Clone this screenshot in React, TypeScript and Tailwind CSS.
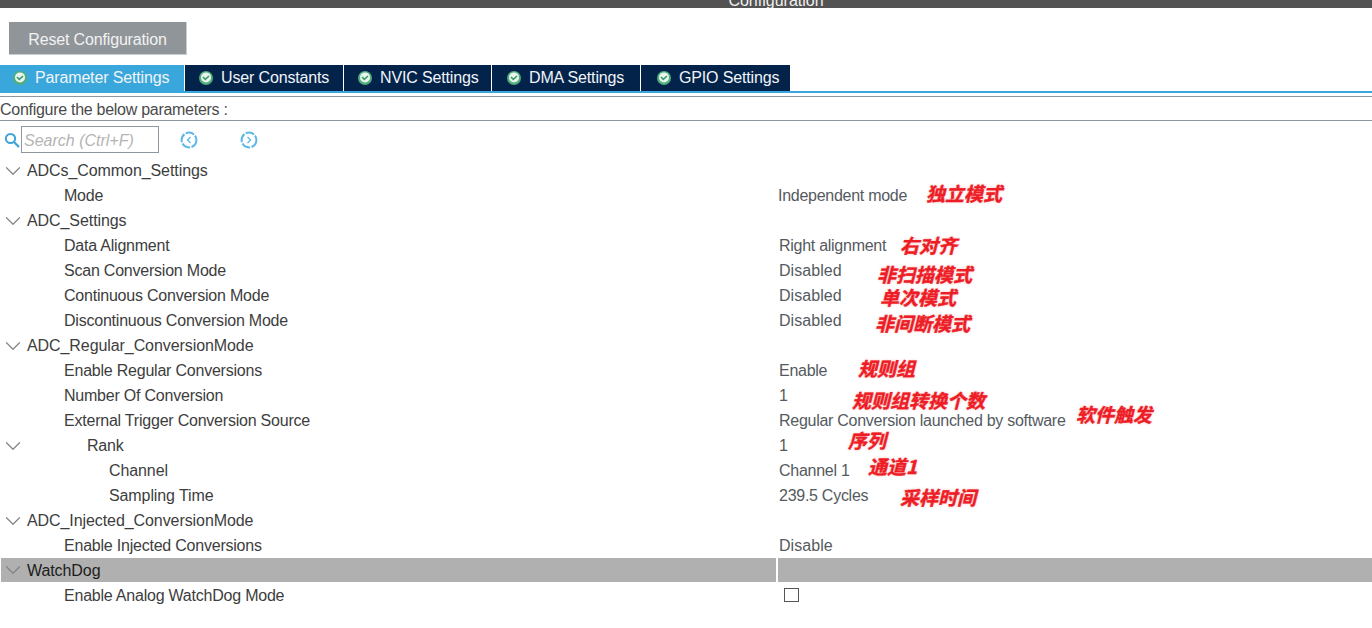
import { ChevronDown } from "lucide-react";

const tabs = [
  { label: "Parameter Settings", width: "w-[184px]", pad: "pl-[13px]", active: true },
  { label: "User Constants", width: "w-[158px]", pad: "pl-[14px]", active: false },
  { label: "NVIC Settings", width: "w-[147px]", pad: "pl-[14px]", active: false },
  { label: "DMA Settings", width: "w-[148px]", pad: "pl-[15px]", active: false },
  { label: "GPIO Settings", width: "w-[149px]", pad: "pl-[16px]", active: false },
];

type Row = { label: string; level: 0 | 1 | 2 | 3; value?: string; shift?: string; selected?: boolean; check?: boolean };

const rows: Row[] = [
  { label: "ADCs_Common_Settings", level: 0 },
  { label: "Mode", level: 1, value: "Independent mode", shift: "-ml-px" },
  { label: "ADC_Settings", level: 0 },
  { label: "Data Alignment", level: 1, value: "Right alignment" },
  { label: "Scan Conversion Mode", level: 1, value: "Disabled", shift: "tracking-[0.05px]" },
  { label: "Continuous Conversion Mode", level: 1, value: "Disabled", shift: "tracking-[0.05px]" },
  { label: "Discontinuous Conversion Mode", level: 1, value: "Disabled", shift: "tracking-[0.05px]" },
  { label: "ADC_Regular_ConversionMode", level: 0 },
  { label: "Enable Regular Conversions", level: 1, value: "Enable" },
  { label: "Number Of Conversion", level: 1, value: "1" },
  { label: "External Trigger Conversion Source", level: 1, value: "Regular Conversion launched by software" },
  { label: "Rank", level: 2, value: "1" },
  { label: "Channel", level: 3, value: "Channel 1" },
  { label: "Sampling Time", level: 3, value: "239.5 Cycles" },
  { label: "ADC_Injected_ConversionMode", level: 0 },
  { label: "Enable Injected Conversions", level: 1, value: "Disable", shift: "tracking-[0.05px]" },
  { label: "WatchDog", level: 0, selected: true },
  { label: "Enable Analog WatchDog Mode", level: 1, check: true },
];

const notes = [
  { text: "独立模式", pos: "left-[926px] top-[180px]" },
  { text: "右对齐", pos: "left-[900px] top-[232px]" },
  { text: "非扫描模式", pos: "left-[877px] top-[261px]" },
  { text: "单次模式", pos: "left-[880px] top-[284px]" },
  { text: "非间断模式", pos: "left-[875px] top-[310px]" },
  { text: "规则组", pos: "left-[858px] top-[355px]" },
  { text: "规则组转换个数", pos: "left-[852px] top-[387px]" },
  { text: "软件触发", pos: "left-[1076px] top-[401px]" },
  { text: "序列", pos: "left-[848px] top-[427px]" },
  { text: "通道1", pos: "left-[868px] top-[453px]" },
  { text: "采样时间", pos: "left-[900px] top-[484px]" },
];

function CheckBadge() {
  return (
    <svg width="14" height="14" viewBox="0 0 14 14" className="shrink-0">
      <circle cx="7" cy="7" r="7" fill="#4fae7a" />
      <circle cx="7" cy="6.4" r="5" fill="#e8f4ee" />
      <path d="M4 6 L6.3 8.3 L10 5" fill="none" stroke="#3a9a68" strokeWidth="1.6" />
    </svg>
  );
}

function NavCircle({ dir }: { dir: "left" | "right" }) {
  return (
    <svg width="18" height="18" viewBox="0 0 18 18">
      <circle cx="9" cy="9" r="7.4" fill="none" stroke="#5cb8e6" strokeWidth="2" strokeDasharray="9 1.4" />
      <path d={dir === "left" ? "M10.5 6 L7.5 9 L10.5 12" : "M7.5 6 L10.5 9 L7.5 12"} fill="none" stroke="#5cb8e6" strokeWidth="1.3" />
    </svg>
  );
}

const levelPad = ["pl-[26px] tracking-[-0.08px]", "pl-[63px] tracking-[-0.22px]", "pl-[86px] tracking-[-0.22px]", "pl-[108px] tracking-[-0.1px]"];

function TreeRow({ row }: { row: Row }) {
  const expandable = row.level === 0 || row.level === 2;
  return (
    <div className="flex h-[25px] items-start">
      <div className={`relative ml-px flex w-[775px] items-center ${levelPad[row.level]} ${row.selected ? "h-[24px] bg-[#b0b0b0] pt-px text-[#1c1c1c]" : "h-[25px] text-[#3d3d3d]"}`}>
        {expandable && (
          <ChevronDown
            className="absolute -left-px top-1/2 -translate-y-1/2 text-[#848484]"
            size={26}
            strokeWidth={1.1}
          />
        )}
        <span className="whitespace-nowrap">{row.label}</span>
      </div>
      <div className={`ml-[2px] flex flex-1 items-center pl-[1px] ${row.selected ? "h-[24px] bg-[#b0b0b0]" : "h-[25px]"}`}>
        {row.value && <span className={`whitespace-nowrap tracking-[-0.27px] text-[#555a60] ${row.shift ?? ""}`}>{row.value}</span>}
        {row.check && <span className="mb-[2px] ml-[5px] h-[14px] w-[15px] border border-[#555] bg-white" />}
      </div>
    </div>
  );
}

export default function App() {
  return (
    <div className="relative h-[628px] w-[1372px] overflow-hidden bg-white font-['Liberation_Sans',sans-serif] text-[16px]">
      {/* title bar, cut off at the top */}
      <div className="flex h-2 items-end justify-center overflow-hidden bg-[#535353] pl-[180px]">
        <span className="mb-[-1px] leading-none whitespace-nowrap text-[#f0f0f0]">Configuration</span>
      </div>

      <div className="pl-[9px] pt-[14px]">
        <button className="h-[33px] w-[178px] border-r border-b border-[#c9cdd0] bg-[#90959a] pt-[3px] tracking-[-0.16px] text-[#f2f2f2]">
          Reset Configuration
        </button>
      </div>

      {/* tabs */}
      <div className="mt-[10px] flex h-[28px] gap-px border-b-[2px] border-[#39a7db]">
        {tabs.map((t) => (
          <div
            key={t.label}
            className={`flex items-center gap-[8px] whitespace-nowrap tracking-[-0.15px] text-[#f0f4f8] ${t.width} ${t.pad} ${t.active ? "bg-[#39a7db]" : "bg-[#03234b]"}`}
          >
            <CheckBadge />
            <span>{t.label}</span>
          </div>
        ))}
      </div>
      <div className="mt-[3px] h-px bg-[#8f979e]" />

      <div className="flex h-[24px] items-center border-b border-[#8f979e] pt-[3px] tracking-[-0.28px] text-[#4a4a4a]">
        Configure the below parameters :
      </div>

      {/* search */}
      <div className="flex h-[37px] items-center pl-[4px]">
        <svg width="16" height="16" viewBox="0 0 16 16" className="shrink-0">
          <circle cx="6.5" cy="6.5" r="4.6" fill="none" stroke="#3ba3d8" strokeWidth="2" />
          <path d="M10 10 L15 15" stroke="#3ba3d8" strokeWidth="2.2" />
        </svg>
        <div className="ml-px flex h-[27px] w-[138px] items-center border border-[#8f979e] pl-[2px] pt-[2px] text-[#b4b4b4] italic">
          Search (Ctrl+F)
        </div>
        <div className="ml-[21px] flex gap-[42px]">
          <NavCircle dir="left" />
          <NavCircle dir="right" />
        </div>
      </div>

      <div>
        {rows.map((r) => (
          <TreeRow key={r.label} row={r} />
        ))}
      </div>

      {/* red handwritten notes over the screenshot */}
      {notes.map((n) => (
        <span
          key={n.text}
          className={`absolute whitespace-nowrap font-['Noto_Sans_CJK_SC',sans-serif] text-[19px] leading-[26px] font-bold text-[#ee1c25] italic [-webkit-text-stroke:0.4px_#ee1c25] [text-shadow:0_0_3px_#f3b7bb] ${n.pos}`}
        >
          {n.text}
        </span>
      ))}
    </div>
  );
}
